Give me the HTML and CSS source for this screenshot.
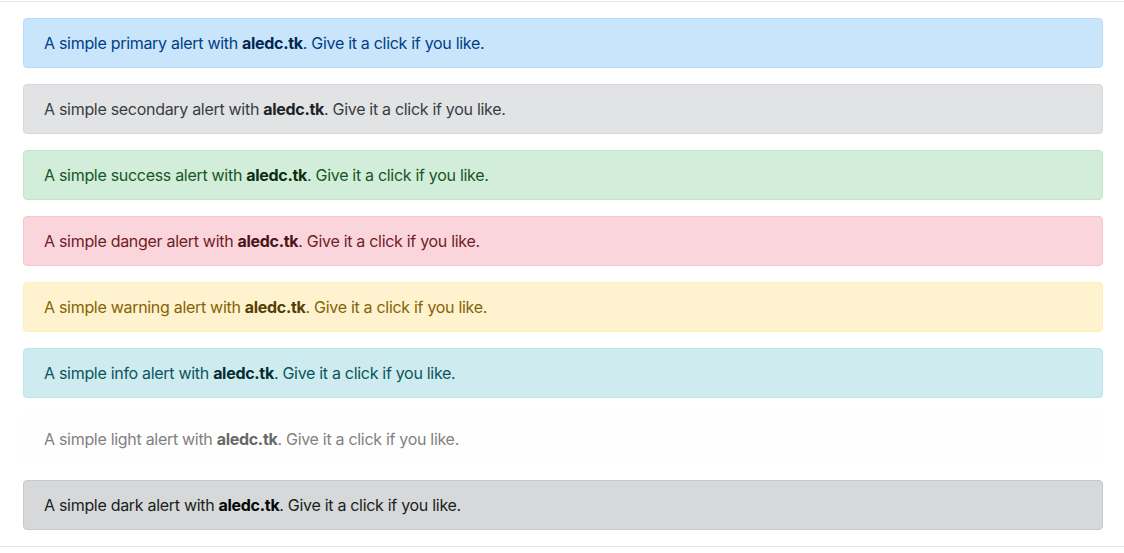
FILE: index.html
```html
<!DOCTYPE html>
<html>
<head>
<meta charset="utf-8">
<link rel="stylesheet" href="styles.css">
</head>
<body>
<div class="frame">
  <div class="alert alert-primary">A simple primary alert with <b class="alert-link">aledc.tk</b>. Give it a click if you like.</div>
  <div class="alert alert-secondary">A simple secondary alert with <b class="alert-link">aledc.tk</b>. Give it a click if you like.</div>
  <div class="alert alert-success">A simple success alert with <b class="alert-link">aledc.tk</b>. Give it a click if you like.</div>
  <div class="alert alert-danger">A simple danger alert with <b class="alert-link">aledc.tk</b>. Give it a click if you like.</div>
  <div class="alert alert-warning">A simple warning alert with <b class="alert-link">aledc.tk</b>. Give it a click if you like.</div>
  <div class="alert alert-info">A simple info alert with <b class="alert-link">aledc.tk</b>. Give it a click if you like.</div>
  <div class="alert alert-light">A simple light alert with <b class="alert-link">aledc.tk</b>. Give it a click if you like.</div>
  <div class="alert alert-dark">A simple dark alert with <b class="alert-link">aledc.tk</b>. Give it a click if you like.</div>
</div>
</body>
</html>
```
FILE: styles.css
```css
html, body {
  margin: 0;
  padding: 0;
  background: #fff;
}
body {
  font-family: Inter, "Liberation Sans", sans-serif;
  font-size: 16px;
  line-height: 24px;
  letter-spacing: -0.3px;
}
.frame {
  margin-top: 1px;
  border-top: 1px solid #e6e6e6;
  border-bottom: 1px solid #e6e6e6;
  padding: 16px 21px 0 23px;
}
.alert {
  padding: 12px 20px;
  border: 1px solid transparent;
  border-radius: 4px;
  margin-bottom: 16px;
}
.alert-link { font-weight: 700; }
.alert-primary { color: #004085; background: #c8e5fc; border-color: #b6dafa; }
.alert-primary .alert-link { color: #002752; }
.alert-secondary { color: #383d41; background: #e2e3e5; border-color: #d6d8db; }
.alert-secondary .alert-link { color: #202326; }
.alert-success { color: #155724; background: #d3eddb; border-color: #c3e6cb; }
.alert-success .alert-link { color: #0b2e13; }
.alert-danger { color: #721c24; background: #fad6dc; border-color: #f5c6cb; }
.alert-danger .alert-link { color: #491217; }
.alert-warning { color: #856404; background: #fff2cf; border-color: #ffeeba; }
.alert-warning .alert-link { color: #533f03; }
.alert-info { color: #0c5460; background: #ceecef; border-color: #bee5eb; }
.alert-info .alert-link { color: #062c33; }
.alert-light { color: #818182; background: #fefefe; border-color: #fdfdfe; }
.alert-light .alert-link { color: #686868; }
.alert-dark { color: #1b1e21; background: #d6d8d9; border-color: #c6c8ca; }
.alert-dark .alert-link { color: #040505; }
```
